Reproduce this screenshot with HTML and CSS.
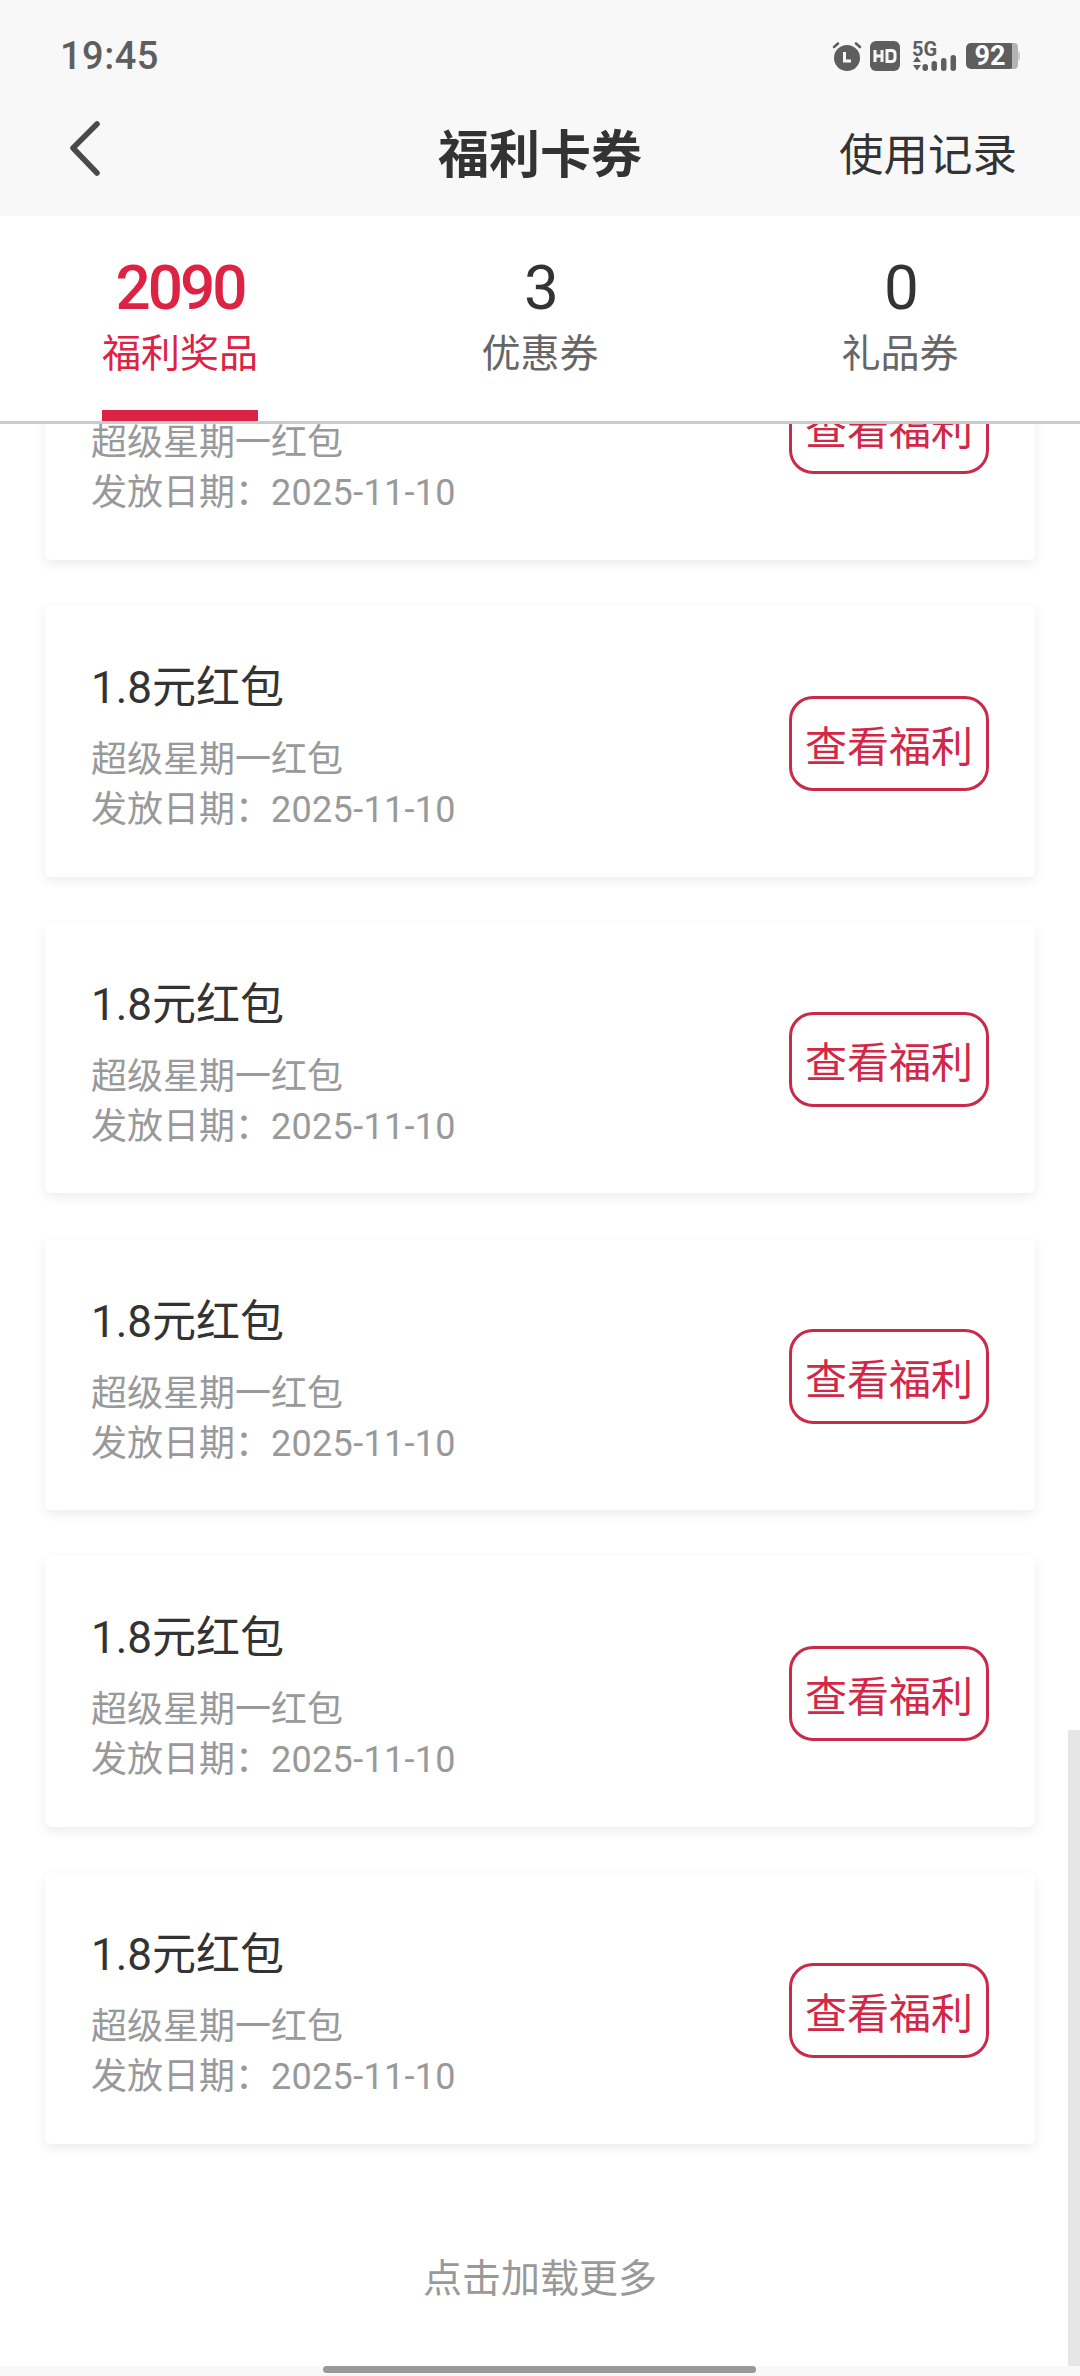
FILE: index.html
```html
<!DOCTYPE html>
<html lang="zh-CN">
<head>
    <meta charset="UTF-8">
    <meta name="viewport" content="width=device-width, initial-scale=1.0">
    <title>福利卡券</title>
    <link rel="stylesheet" href="styles.css">
</head>
<body>
    <div class="app">
        <header class="top-bar">
            <div class="status-bar">
                <span class="status-time">19:45</span>
                <div class="status-icons">
                    <svg class="icon-alarm" width="30" height="30" viewBox="0 0 30 30">
                        <circle cx="15" cy="17" r="13" fill="#5e5e5e"/>
                        <path d="M2 6 L6 2.5 M28 6 L24 2.5" stroke="#5e5e5e" stroke-width="2.6" stroke-linecap="round"/>
                        <path d="M12.5 11 V20 H19" fill="none" stroke="#f8f8f8" stroke-width="3"/>
                    </svg>
                    <svg class="icon-hd" width="30" height="30" viewBox="0 0 30 30">
                        <rect width="30" height="30" rx="6" fill="#5e5e5e"/>
                        <path d="M5 9 V21 M12 9 V21 M5 15 H12" stroke="#f8f8f8" stroke-width="3" fill="none"/>
                        <path d="M17 9.5 H21.5 Q25 9.5 25 13 V17 Q25 20.5 21.5 20.5 H17 Z" stroke="#f8f8f8" stroke-width="3" fill="none"/>
                    </svg>
                    <svg class="icon-signal" width="44" height="38" viewBox="0 -4 44 38">
                        <text class="signal-text" x="0" y="14.5">5G</text>
                        <path d="M1 21 L5 15.5 L9 21 Z M1 24 H9 L5 29.5 Z" fill="#5e5e5e"/>
                        <rect x="10.500" y="23" width="5.500" height="7" rx="2.700" fill="#5e5e5e"/>
                        <rect x="19.500" y="20" width="5.500" height="10" rx="2.700" fill="#5e5e5e"/>
                        <rect x="29" y="17" width="5.500" height="13" rx="2.700" fill="#5e5e5e"/>
                        <rect x="38.500" y="14" width="5.500" height="16" rx="2.700" fill="#5e5e5e"/>
                    </svg>
                    <svg class="icon-battery" width="54" height="36" viewBox="0 -4 54 36">
                        <rect x="0" y="1" width="49" height="26" rx="5" fill="#5e5e5e"/>
                        <path d="M46 1 H48 Q52 1 52 5 V23 Q52 27 48 27 H46 Z" fill="#b4b4b4"/>
                        <path d="M52 9 Q54 10 54 14 Q54 18 52 19 Z" fill="#c8c8c8"/>
                        <text class="battery-text" x="24" y="23">92</text>
                    </svg>
                </div>
            </div>
            <nav class="title-bar">
                <svg class="back-icon" width="36" height="60" viewBox="0 0 36 60">
                    <path d="M31 6 L7 30 L31 55" fill="none" stroke="#4a4a4a" stroke-width="5.500" stroke-linecap="round" stroke-linejoin="round"/>
                </svg>
                <h1 class="page-title">福利卡券</h1>
                <a class="history-link">使用记录</a>
            </nav>
        </header>

        <div class="tabs">
            <div class="tab active">
                <span class="tab-num">2090</span>
                <span class="tab-label">福利奖品</span>
            </div>
            <div class="tab">
                <span class="tab-num">3</span>
                <span class="tab-label">优惠券</span>
            </div>
            <div class="tab">
                <span class="tab-num">0</span>
                <span class="tab-label">礼品券</span>
            </div>
        </div>

        <main class="scroll-area">
            <div class="card-list">
                <!-- first card is scrolled under the tabs, its title is out of view -->
                <div class="card">
                    <div class="card-info">
                        <div class="card-title">&nbsp;</div>
                        <div class="card-text">超级星期一红包</div>
                        <div class="card-text">发放日期：<span class="card-date">2025-11-10</span></div>
                    </div>
                    <button class="card-btn">查看福利</button>
                </div>
                <div class="card">
                    <div class="card-info">
                        <div class="card-title">1.8元红包</div>
                        <div class="card-text">超级星期一红包</div>
                        <div class="card-text">发放日期：<span class="card-date">2025-11-10</span></div>
                    </div>
                    <button class="card-btn">查看福利</button>
                </div>
                <div class="card">
                    <div class="card-info">
                        <div class="card-title">1.8元红包</div>
                        <div class="card-text">超级星期一红包</div>
                        <div class="card-text">发放日期：<span class="card-date">2025-11-10</span></div>
                    </div>
                    <button class="card-btn">查看福利</button>
                </div>
                <div class="card">
                    <div class="card-info">
                        <div class="card-title">1.8元红包</div>
                        <div class="card-text">超级星期一红包</div>
                        <div class="card-text">发放日期：<span class="card-date">2025-11-10</span></div>
                    </div>
                    <button class="card-btn">查看福利</button>
                </div>
                <div class="card">
                    <div class="card-info">
                        <div class="card-title">1.8元红包</div>
                        <div class="card-text">超级星期一红包</div>
                        <div class="card-text">发放日期：<span class="card-date">2025-11-10</span></div>
                    </div>
                    <button class="card-btn">查看福利</button>
                </div>
                <div class="card">
                    <div class="card-info">
                        <div class="card-title">1.8元红包</div>
                        <div class="card-text">超级星期一红包</div>
                        <div class="card-text">发放日期：<span class="card-date">2025-11-10</span></div>
                    </div>
                    <button class="card-btn">查看福利</button>
                </div>
            </div>
            <div class="load-more">点击加载更多</div>
            <div class="scroll-thumb"></div>
        </main>

        <div class="home-bar">
            <div class="home-handle"></div>
        </div>
    </div>
</body>
</html>
```

FILE: styles.css
```css
* {
    box-sizing: border-box;
}

body {
    margin: 0;
    padding: 0;
    background-color: #ffffff;
    font-family: Roboto, "Noto Sans CJK SC", sans-serif;
}

.app {
    display: flex;
    flex-direction: column;
    height: 100vh;
    overflow: hidden;
}

.top-bar {
    height: 216px;
    background-color: #f8f8f8;
    flex-shrink: 0;
}

.status-bar {
    display: flex;
    justify-content: space-between;
    align-items: center;
    height: 112px;
    padding: 0 60px 0 60px;
}

.status-time {
    font-size: 38px;
    font-weight: 500;
    color: #5e5e5e;
    letter-spacing: 0.5px;
}

.status-icons {
    display: flex;
    align-items: center;
    gap: 8px;
}

.icon-signal {
    margin: 0 2px 0 4px;
}

.signal-text {
    font-size: 20px;
    font-weight: 700;
    fill: #5e5e5e;
}

.battery-text {
    font-size: 27px;
    font-weight: 700;
    fill: #ffffff;
    text-anchor: middle;
}

.title-bar {
    position: relative;
    display: flex;
    justify-content: space-between;
    align-items: center;
    height: 70px;
    padding: 0 63px 0 66px;
}

.back-icon {
    margin-top: 2px;
}

.page-title {
    position: absolute;
    left: 0;
    right: 0;
    margin: 0;
    padding-top: 8px;
    font-size: 51px;
    font-weight: 700;
    color: #333333;
    text-align: center;
}

.history-link {
    padding-top: 8px;
    font-size: 44.500px;
    color: #333333;
}

.tabs {
    display: grid;
    grid-template-columns: repeat(3, 1fr);
    height: 208px;
    background-color: #ffffff;
    border-bottom: 3px solid #cccccc;
    flex-shrink: 0;
    position: relative;
    z-index: 2;
}

.tab {
    display: flex;
    flex-direction: column;
    align-items: center;
    padding-top: 36px;
    color: #666666;
}

.tab-num {
    font-size: 62px;
    line-height: 72px;
    letter-spacing: -3px;
    color: #333333;
}

.tab-label {
    font-size: 39px;
    line-height: 60px;
}

.tab.active {
    color: #dc2343;
    position: relative;
}

.tab.active .tab-num {
    color: #dc2343;
    font-weight: 500;
}

.tab.active::after {
    content: "";
    position: absolute;
    left: 102px;
    bottom: 0;
    width: 156px;
    height: 11px;
    background-color: #dc2343;
}

.scroll-area {
    position: relative;
    flex: 1;
    overflow: hidden;
}

.card-list {
    display: flex;
    flex-direction: column;
    gap: 46px;
    margin-top: -135px;
    padding: 0 45px;
}

.card {
    display: flex;
    justify-content: space-between;
    align-items: center;
    height: 270.75px;
    padding: 0 46px;
    background-color: #ffffff;
    border-radius: 6px;
    box-shadow: 0 4px 12px rgba(0, 0, 0, 0.08);
}

.card-info {
    padding-top: 9px;
}

.card-title {
    font-size: 44px;
    line-height: 64px;
    color: #333333;
    margin-bottom: 15px;
}

.card-text {
    font-size: 36px;
    line-height: 50px;
    color: #999999;
}

.card-date {
    letter-spacing: 0.3px;
}

.card-btn {
    width: 200px;
    height: 95px;
    margin-top: 4px;
    padding: 0;
    background-color: #ffffff;
    border: 3px solid #c92a4a;
    border-radius: 24px;
    font-family: inherit;
    font-size: 42px;
    color: #d32747;
}

.load-more {
    margin-top: 105px;
    font-size: 39px;
    line-height: 60px;
    color: #999999;
    text-align: center;
}

.scroll-thumb {
    position: absolute;
    right: 0;
    bottom: 0;
    width: 12px;
    height: 636px;
    background-color: #e6e6e6;
}

.home-bar {
    height: 10px;
    background-color: #f8f8f8;
    flex-shrink: 0;
}

.home-handle {
    width: 433px;
    height: 7px;
    margin-left: 323px;
    background-color: #999999;
    border-radius: 4px;
}
```
